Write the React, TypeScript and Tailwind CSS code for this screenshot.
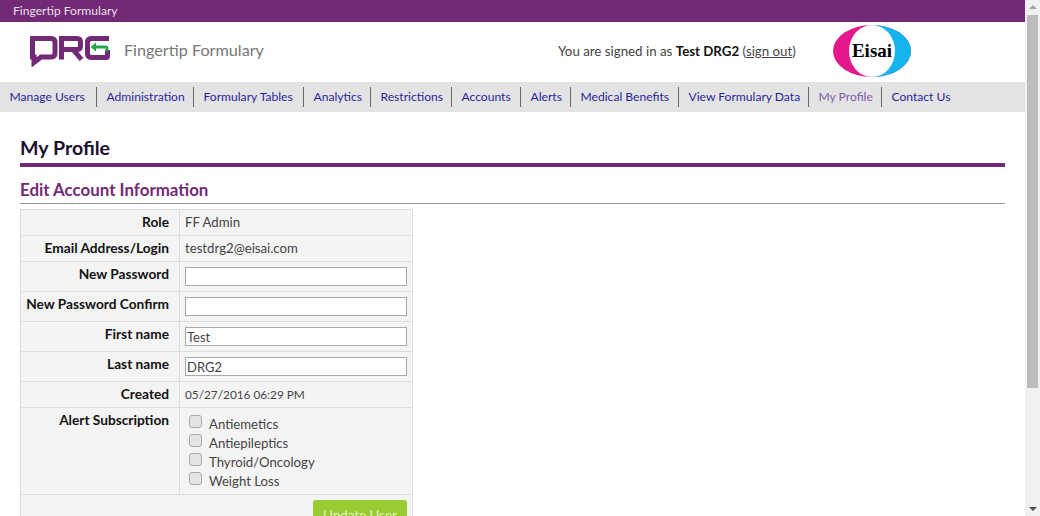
const navItems = [
  { label: 'Manage Users', width: 'w-[96px]' },
  { label: 'Administration', width: 'w-[97px]' },
  { label: 'Formulary Tables', width: 'w-[110px]' },
  { label: 'Analytics', width: 'w-[67px]' },
  { label: 'Restrictions', width: 'w-[81px]' },
  { label: 'Accounts', width: 'w-[69px]' },
  { label: 'Alerts', width: 'w-[50px]' },
  { label: 'Medical Benefits', width: 'w-[108px]' },
  { label: 'View Formulary Data', width: 'w-[130px]' },
  { label: 'My Profile', width: 'w-[73px]' },
  { label: 'Contact Us', width: 'w-[80px]' },
];

const alerts = ['Antiemetics', 'Antiepileptics', 'Thyroid/Oncology', 'Weight Loss'];

function DrgLogo() {
  return (
    <svg width="80" height="31" viewBox="0 0 80 31" fill="none">
      <path d="M2.500 2.500H21Q25 2.500 25 6.500V17Q25 21 21 21H11L4 26.500V21H2.500Z" stroke="#722a76" strokeWidth="5" />
      <path d="M31.500 23.500V2.500H47Q50.500 2.500 50.500 6V10Q50.500 13.500 47 13.500H32M43 13.500L51.500 23.500" stroke="#722a76" strokeWidth="5" />
      <path d="M79 2.500H61.500Q57.500 2.500 57.500 6.500V17.500Q57.500 21.500 61.500 21.500H76.500Q77.500 21.500 77.500 20V14" stroke="#722a76" strokeWidth="5" />
      <path d="M77 15.500V12.500Q77 11 75 11H65" stroke="#22a84a" strokeWidth="3" />
      <path d="M60.500 11L66 6.500V15.500Z" fill="#22a84a" />
    </svg>
  );
}

function EisaiLogo() {
  return (
    <div className="relative h-[52px] w-[78px]">
      <svg width="78" height="52" viewBox="0 0 78 52" className="absolute inset-0">
        <ellipse cx="39" cy="26" rx="39" ry="26" fill="#e5178c" />
        <path d="M39 0A39 26 0 0 1 39 52Z" fill="#14b5ef" />
        <ellipse cx="39" cy="26" rx="23" ry="26" fill="#ffffff" />
      </svg>
      <span className="absolute inset-0 flex items-center justify-center font-['Liberation_Serif',serif] text-[19px] font-bold text-black">
        Eisai
      </span>
    </div>
  );
}

function Field({ value }: { value?: string }) {
  return (
    <input
      readOnly
      value={value ?? ''}
      className="block h-[19px] w-[222px] border border-[#a9a9a9] bg-white px-[1px] text-[13px] text-[#444]"
    />
  );
}

function Row({ label, children, height }: { label: string; children: React.ReactNode; height: string }) {
  return (
    <tr className={height}>
      <th className="w-[159px] border border-[#ddd] pt-[2px] pr-[10px] text-right align-top text-[13.700px] leading-[19px] font-bold whitespace-nowrap text-[#111]">
        {label}
      </th>
      <td className="border border-[#ddd] px-[5px] pt-[5px] align-top text-[13.200px] leading-[15px] text-[#444]">
        {children}
      </td>
    </tr>
  );
}

export default function App() {
  return (
    <div className="flex h-[516px] w-[1040px] overflow-hidden bg-white font-['Lato',sans-serif] text-[#333]">
      <div className="w-[1025px] shrink-0 overflow-hidden">
        <div className="h-[22px] bg-[#722a76] pl-[13px] text-[12.100px] leading-[22px] text-[#e8e0ea]">Fingertip Formulary</div>

        <header className="flex h-[60px] items-start">
          <div className="mt-[14px] ml-[30px]">
            <DrgLogo />
          </div>
          <div className="mt-[16px] ml-[14px] w-[140px] text-[16.200px] leading-[24px] whitespace-nowrap text-[#777]">Fingertip Formulary</div>
          <div className="mt-[20px] ml-[294px] w-[275px] text-[13.300px] leading-[18px] whitespace-nowrap text-[#444]">
            You are signed in as <b className="font-bold text-[#111]">Test DRG2</b> (<span className="underline">sign out</span>)
          </div>
          <div className="mt-[3px]">
            <EisaiLogo />
          </div>
        </header>

        <nav className="flex h-[30px] items-center bg-[#e3e3e3]">
          {navItems.map((item, i) => (
            <a
              key={item.label}
              className={`flex h-[20px] items-center pl-[9.500px] text-[12.100px] whitespace-nowrap ${item.width} ${i > 0 ? 'border-l border-[#666]' : ''} ${item.label === 'My Profile' ? 'text-[#7c5bb0]' : 'text-[#2a1fa0]'}`}
            >
              {item.label}
            </a>
          ))}
        </nav>

        <main className="px-[20px]">
          <h1 className="mt-[24px] border-b-4 border-[#722a76] pb-[3px] text-[19.600px] leading-[24px] font-bold text-[#1c1030]">My Profile</h1>
          <h2 className="mt-[13px] border-b border-[#999] pb-[3px] text-[16.900px] leading-[20px] font-bold text-[#722a76]">Edit Account Information</h2>
          <table className="mt-[5px] w-[393px] border-collapse bg-[#f4f4f4]">
            <tbody>
              <Row label="Role" height="h-[26px]">FF Admin</Row>
              <Row label="Email Address/Login" height="h-[26px]">testdrg2@eisai.com</Row>
              <Row label="New Password" height="h-[30px]"><Field /></Row>
              <Row label="New Password Confirm" height="h-[30px]"><Field /></Row>
              <Row label="First name" height="h-[30px]"><Field value="Test" /></Row>
              <Row label="Last name" height="h-[30px]"><Field value="DRG2" /></Row>
              <Row label="Created" height="h-[26px]"><span className="text-[11.800px]">05/27/2016 06:29 PM</span></Row>
              <Row label="Alert Subscription" height="h-[87px]">
                <div className="ml-[3.500px] pt-[2px]">
                  {alerts.map((a) => (
                    <label key={a} className="flex h-[19px] items-start">
                      <span className="h-[13px] w-[13px] rounded-[3px] border border-[#aaa] bg-[#e4e4e4]" />
                      <span className="ml-[7.500px] leading-[19px]">{a}</span>
                    </label>
                  ))}
                </div>
              </Row>
              <tr>
                <td colSpan={2} className="border border-[#ddd] pt-[5px] pr-[5px] text-right">
                  <button className="h-[30px] w-[94px] rounded-[3px] bg-[#99cc33] text-[13.400px] text-[#e6f3c5]">Update User</button>
                </td>
              </tr>
            </tbody>
          </table>
        </main>
      </div>

      <div className="flex h-full w-[15px] shrink-0 flex-col items-center bg-[#f1f1f1]">
        <div className="mt-[5px] h-0 w-0 border-x-[4px] border-b-[4px] border-x-transparent border-b-[#a3a3a3]" />
        <div className="mt-[6px] h-[373px] w-[11px] bg-[#bcbcbc]" />
        <div className="mt-[119px] h-0 w-0 border-x-[4px] border-t-[4px] border-x-transparent border-t-[#505050]" />
      </div>
    </div>
  );
}
